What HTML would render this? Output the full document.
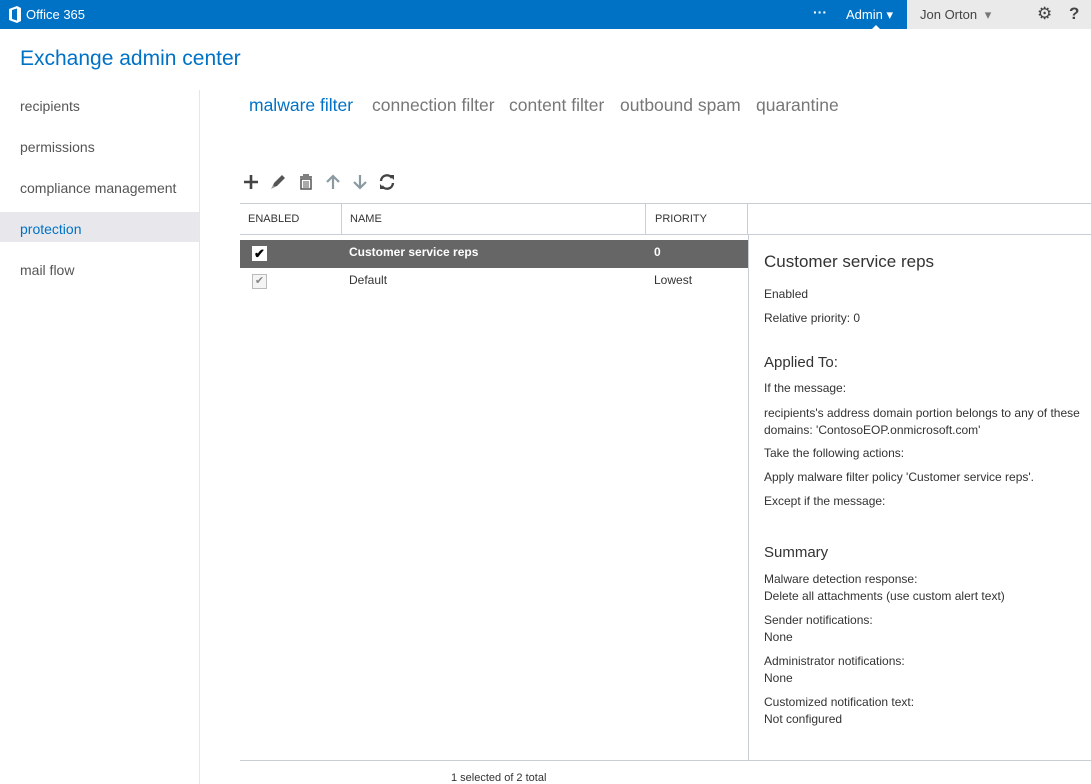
<!DOCTYPE html>
<html><head><meta charset="utf-8"><style>
*{margin:0;padding:0;box-sizing:border-box}
body{width:1091px;height:784px;overflow:hidden;background:#fff;font-family:"Segoe UI","Liberation Sans",sans-serif;color:#333;position:relative}
.a{position:absolute;white-space:nowrap}
.top{position:absolute;left:0;top:0;width:1091px;height:29px;background:#0072c6}
.s{font-size:12px;color:#333}
</style></head><body>
<div class="top"></div>
<svg class="a" style="left:8px;top:6px" width="14" height="17" viewBox="0 0 14 17"><path d="M1 3 L9 0 L13 2 L13 15 L9 17 L1 14 Z M4 4 L4 13 L9 14.5 L9 2.5 Z" fill="#fff" fill-rule="evenodd"/></svg>
<div class="a" style="left:26px;top:7px;color:#fff;font-size:13px">Office 365</div>
<div class="a" style="left:813px;top:4px;color:#fff;font-size:14px;font-weight:bold">···</div>
<div class="a" style="left:846px;top:7px;color:#fff;font-size:13px">Admin ▾</div>
<div class="a" style="left:872px;top:25px;width:0;height:0;border-left:4px solid transparent;border-right:4px solid transparent;border-bottom:4px solid #fff"></div>
<div class="a" style="left:907px;top:0;width:184px;height:29px;background:#eaeaea"></div>
<div class="a" style="left:920px;top:7px;color:#444;font-size:13px">Jon Orton <span style="color:#777;margin-left:4px">▾</span></div>
<div class="a" style="left:1037px;top:4px;color:#444;font-size:17px">⚙</div>
<div class="a" style="left:1069px;top:4px;color:#444;font-size:17px;font-weight:bold">?</div>

<div class="a" style="left:20px;top:47px;font-size:21px;color:#0072c6">Exchange admin center</div>
<div class="a" style="left:199px;top:90px;width:1px;height:694px;background:#e6e6e6"></div>
<div class="a" style="left:20px;top:98px;font-size:14px;color:#555">recipients</div>
<div class="a" style="left:20px;top:139px;font-size:14px;color:#555">permissions</div>
<div class="a" style="left:20px;top:180px;font-size:14px;color:#555">compliance management</div>
<div class="a" style="left:0;top:212px;width:199px;height:30px;background:#e8e8ec"></div>
<div class="a" style="left:20px;top:221px;font-size:14px;color:#0072c6">protection</div>
<div class="a" style="left:20px;top:262px;font-size:14px;color:#555">mail flow</div>

<div class="a" style="left:249px;top:95px;font-size:17.5px;color:#0072c6">malware filter</div>
<div class="a" style="left:372px;top:95px;font-size:17.5px;color:#777">connection filter</div>
<div class="a" style="left:509px;top:95px;font-size:17.5px;color:#777">content filter</div>
<div class="a" style="left:620px;top:95px;font-size:17.5px;color:#777">outbound spam</div>
<div class="a" style="left:756px;top:95px;font-size:17.5px;color:#777">quarantine</div>

<svg class="a" style="left:243px;top:173px" width="160" height="18" viewBox="0 0 160 18">
<path d="M8 2v14M1 9h14" stroke="#444" stroke-width="2.6"/>
<path d="M29 15l2-5 8-8 3 3-8 8z" fill="#555"/><path d="M28 16l2-4 2 2z" fill="#999"/>
<path d="M57 4h12M60 2h6M58 6h10v10h-10z" stroke="#555" stroke-width="1.5" fill="none"/><path d="M61 8v7M63 8v7M65 8v7" stroke="#555"/>
<path d="M90 16V3M84 9l6-6 6 6" stroke="#8a9aa0" stroke-width="2.2" fill="none"/>
<path d="M117 2v13M111 9l6 6 6-6" stroke="#8a9aa0" stroke-width="2.2" fill="none"/>
<path d="M138 8a6 6 0 0 1 11-3M150 10a6 6 0 0 1-11 3" stroke="#444" stroke-width="2.4" fill="none"/><path d="M146 2l5 0 0 5z M142 16l-5 0 0-5z" fill="#444"/>
</svg>

<div class="a" style="left:240px;top:203px;width:851px;height:1px;background:#c8ced4"></div>
<div class="a" style="left:240px;top:234px;width:851px;height:1px;background:#c8ced4"></div>
<div class="a" style="left:341px;top:204px;width:1px;height:30px;background:#c8ced4"></div>
<div class="a" style="left:645px;top:204px;width:1px;height:30px;background:#c8ced4"></div>
<div class="a" style="left:747px;top:204px;width:1px;height:30px;background:#c8ced4"></div>
<div class="a" style="left:248px;top:213px;font-size:11px;color:#333">ENABLED</div>
<div class="a" style="left:350px;top:213px;font-size:11px;color:#333">NAME</div>
<div class="a" style="left:655px;top:213px;font-size:11px;color:#333">PRIORITY</div>

<div class="a" style="left:240px;top:240px;width:508px;height:28px;background:#666"></div>
<div class="a" style="left:252px;top:246px;width:15px;height:15px;background:#fff;font-size:13px;line-height:15px;text-align:center;color:#000;font-weight:bold">✔</div>
<div class="a" style="left:349px;top:245px;font-size:12px;font-weight:bold;color:#fff">Customer service reps</div>
<div class="a" style="left:654px;top:245px;font-size:12px;font-weight:bold;color:#fff">0</div>
<div class="a" style="left:252px;top:274px;width:15px;height:15px;background:#f4f4f4;border:1px solid #bbb;font-size:11px;line-height:13px;text-align:center;color:#888">✔</div>
<div class="a s" style="left:349px;top:273px">Default</div>
<div class="a s" style="left:654px;top:273px">Lowest</div>

<div class="a" style="left:748px;top:235px;width:1px;height:525px;background:#c8ced4"></div>
<div class="a" style="left:240px;top:760px;width:851px;height:1px;background:#c8ced4"></div>
<div class="a" style="left:451px;top:772px;font-size:11px;color:#333">1 selected of 2 total</div>

<div class="a" style="left:764px;top:252px;font-size:17px;color:#333">Customer service reps</div>
<div class="a s" style="left:764px;top:287px">Enabled</div>
<div class="a s" style="left:764px;top:311px">Relative priority: 0</div>
<div class="a" style="left:764px;top:354px;font-size:15px;color:#333">Applied To:</div>
<div class="a s" style="left:764px;top:381px">If the message:</div>
<div class="a s" style="left:764px;top:405px;line-height:17px">recipients's address domain portion belongs to any of these<br>domains: 'ContosoEOP.onmicrosoft.com'</div>
<div class="a s" style="left:764px;top:446px">Take the following actions:</div>
<div class="a s" style="left:764px;top:470px">Apply malware filter policy 'Customer service reps'.</div>
<div class="a s" style="left:764px;top:494px">Except if the message:</div>
<div class="a" style="left:764px;top:544px;font-size:15px;color:#333">Summary</div>
<div class="a s" style="left:764px;top:571px;line-height:17px">Malware detection response:<br>Delete all attachments (use custom alert text)</div>
<div class="a s" style="left:764px;top:612px;line-height:17px">Sender notifications:<br>None</div>
<div class="a s" style="left:764px;top:653px;line-height:17px">Administrator notifications:<br>None</div>
<div class="a s" style="left:764px;top:694px;line-height:17px">Customized notification text:<br>Not configured</div>
</body></html>
